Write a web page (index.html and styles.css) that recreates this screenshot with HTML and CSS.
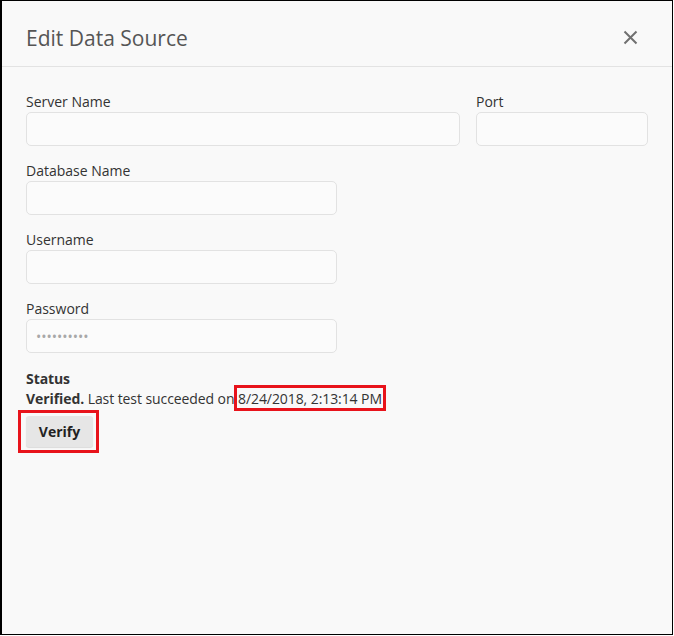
FILE: index.html
```html
<!DOCTYPE html>
<html>
<head>
<meta charset="utf-8">
<link rel="stylesheet" href="styles.css">
</head>
<body>
<div class="dialog">
  <div class="header">
    <h1 class="title">Edit Data Source</h1>
    <button class="close" aria-label="Close">
      <svg width="15" height="15" viewBox="0 0 15 15"><path d="M1.5 1.5 L13.5 13.5 M13.5 1.5 L1.5 13.5" stroke="#707070" stroke-width="2" fill="none"/></svg>
    </button>
  </div>
  <div class="body">
    <div class="row">
      <div class="field server">
        <label class="label">Server Name</label>
        <input class="input" type="text">
      </div>
      <div class="field port">
        <label class="label">Port</label>
        <input class="input" type="text">
      </div>
    </div>
    <div class="field short">
      <label class="label">Database Name</label>
      <input class="input" type="text">
    </div>
    <div class="field short">
      <label class="label">Username</label>
      <input class="input" type="text">
    </div>
    <div class="field short">
      <label class="label">Password</label>
      <input class="input" type="text" placeholder="••••••••••">
    </div>
    <div class="status">
      <div class="status-title">Status</div>
      <div class="status-text"><b>Verified.</b> Last test succeeded on <span class="date">8/24/2018, 2:13:14 PM</span></div>
      <div class="verify-wrap"><button class="verify">Verify</button></div>
    </div>
  </div>
</div>
</body>
</html>
```
FILE: styles.css
```css
html, body {
  margin: 0;
  padding: 0;
  background: #fff;
}
body {
  font-family: "Open Sans", "Liberation Sans", sans-serif;
  color: #333;
}
.dialog {
  box-sizing: border-box;
  width: 673px;
  height: 635px;
  border: 1px solid #000;
  border-left-width: 2px;
  background: #f9f9f9;
}
.header {
  box-sizing: border-box;
  height: 66px;
  border-bottom: 1px solid #e3e3e3;
  display: flex;
  align-items: center;
  justify-content: space-between;
  padding: 8px 34px 0 24px;
}
.title {
  margin: 0;
  font-size: 21px;
  font-weight: 400;
  color: #555;
}
.close {
  border: 0;
  background: none;
  padding: 0;
  width: 15px;
  height: 15px;
  display: flex;
}
.body {
  padding: 24px 24px 0 24px;
}
.row {
  display: flex;
  gap: 16px;
}
.field {
  display: flex;
  flex-direction: column;
  margin-bottom: 14px;
}
.server { width: 435px; }
.port { width: 172px; }
.short { width: 311px; }
.label {
  font-size: 14px;
  line-height: 20px;
  margin-bottom: 0;
  padding-top: 1px;
  color: #333;
}
.input {
  box-sizing: border-box;
  height: 34px;
  border: 1px solid #e2e2e2;
  border-radius: 5px;
  background: #fbfbfb;
  padding: 0 9px;
  font-family: inherit;
  font-size: 14px;
  outline: none;
}
.input::placeholder {
  color: #a8a8a8;
}
.status {
  font-size: 14px;
  line-height: 20px;
  padding-top: 2px;
  letter-spacing: -0.08px;
}
.status-title {
  font-weight: 700;
}
.status-text b {
  font-weight: 700;
}
.date {
  position: relative;
}
.date::after {
  content: "";
  position: absolute;
  left: -4px;
  right: -4px;
  top: -4px;
  bottom: -3px;
  border: 3px solid #e8131b;
}
.verify-wrap {
  display: inline-block;
  margin: 1px 0 0 -8px;
  border: 3px solid #e8131b;
  padding: 3px 3px 3px 5px;
}
.verify {
  display: block;
  width: 67px;
  height: 31px;
  border: 0;
  border-radius: 3px;
  background: #e6e6e6;
  box-shadow: 0 1px 1px rgba(0,0,0,0.12);
  font-family: inherit;
  font-size: 14px;
  font-weight: 700;
  color: #222;
}
```
